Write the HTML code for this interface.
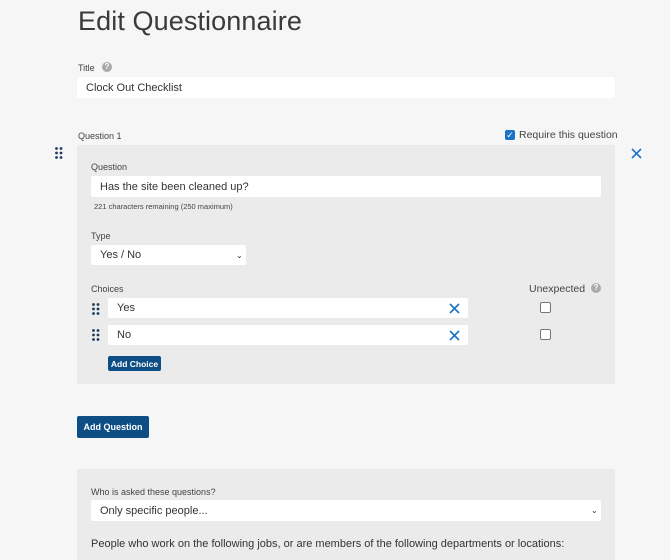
<!DOCTYPE html>
<html><head><style>
body{margin:0;width:670px;height:560px;background:#f6f6f6;font-family:"Liberation Sans",sans-serif;color:#333;position:relative;overflow:hidden}
.a{position:absolute}
.lbl{font-size:9px;color:#444}
.inp{background:#fff;border-radius:2px;font-size:11px;color:#333;box-sizing:border-box;padding-left:9px;display:flex;align-items:center}
.btn{background:#0d4f85;color:#fff;font-weight:bold;border-radius:2px;display:flex;align-items:center;justify-content:center}
.cb{width:9px;height:9px;border:1px solid #777;border-radius:2px;background:#fff}
.q{width:10px;height:10px;border-radius:50%;background:#aaa;color:#fff;font-size:8px;font-weight:bold;text-align:center;line-height:10px}
</style></head><body>
<div class="a" style="left:78px;top:6px;font-size:27px;font-weight:300;color:#3a3a3a;letter-spacing:.1px">Edit Questionnaire</div>
<div class="a lbl" style="left:78px;top:63px">Title</div>
<div class="a q" style="left:102px;top:62px">?</div>
<div class="a inp" style="left:77px;top:77px;width:538px;height:21px">Clock Out Checklist</div>
<div class="a lbl" style="left:78px;top:131px">Question 1</div>
<div class="a" style="left:505px;top:130px;width:10px;height:10px;background:#1a73c9;border-radius:2px;color:#fff;font-size:9px;line-height:10px;text-align:center">✓</div>
<div class="a" style="left:519px;top:129px;font-size:10.5px;color:#444">Require this question</div>
<svg class="a" style="left:55px;top:147px" width="8" height="12"><g fill="#1d3a5c"><circle cx="1.5" cy="1.5" r="1.4"/><circle cx="6" cy="1.5" r="1.4"/><circle cx="1.5" cy="6" r="1.4"/><circle cx="6" cy="6" r="1.4"/><circle cx="1.5" cy="10.5" r="1.4"/><circle cx="6" cy="10.5" r="1.4"/></g></svg>
<svg class="a" style="left:631px;top:148px" width="11" height="11"><path d="M1 1L10 10M10 1L1 10" stroke="#1a73c9" stroke-width="1.6"/></svg>
<div class="a" style="left:77px;top:145px;width:538px;height:239px;background:#ebebeb"></div>
<div class="a lbl" style="left:91px;top:162px">Question</div>
<div class="a inp" style="left:91px;top:176px;width:510px;height:21px">Has the site been cleaned up?</div>
<div class="a" style="left:94px;top:202px;font-size:7.5px;color:#444">221 characters remaining (250 maximum)</div>
<div class="a lbl" style="left:91px;top:231px">Type</div>
<div class="a inp" style="left:91px;top:245px;width:155px;height:20px">Yes / No<span style="position:absolute;left:145px;font-size:8px">⌄</span></div>
<div class="a lbl" style="left:91px;top:284px">Choices</div>
<div class="a" style="left:529px;top:283px;font-size:10.5px;color:#444">Unexpected</div>
<div class="a q" style="left:591px;top:283px">?</div>
<svg class="a" style="left:92px;top:303px" width="8" height="12"><g fill="#1d3a5c"><circle cx="1.5" cy="1.5" r="1.4"/><circle cx="6" cy="1.5" r="1.4"/><circle cx="1.5" cy="6" r="1.4"/><circle cx="6" cy="6" r="1.4"/><circle cx="1.5" cy="10.5" r="1.4"/><circle cx="6" cy="10.5" r="1.4"/></g></svg>
<svg class="a" style="left:92px;top:329px" width="8" height="12"><g fill="#1d3a5c"><circle cx="1.5" cy="1.5" r="1.4"/><circle cx="6" cy="1.5" r="1.4"/><circle cx="1.5" cy="6" r="1.4"/><circle cx="6" cy="6" r="1.4"/><circle cx="1.5" cy="10.5" r="1.4"/><circle cx="6" cy="10.5" r="1.4"/></g></svg>
<div class="a inp" style="left:108px;top:298px;width:360px;height:20px">Yes</div>
<div class="a inp" style="left:108px;top:325px;width:360px;height:20px">No</div>
<svg class="a" style="left:449px;top:303px" width="11" height="11"><path d="M1 1L10 10M10 1L1 10" stroke="#1a73c9" stroke-width="1.6"/></svg>
<svg class="a" style="left:449px;top:330px" width="11" height="11"><path d="M1 1L10 10M10 1L1 10" stroke="#1a73c9" stroke-width="1.6"/></svg>
<div class="a cb" style="left:540px;top:302px"></div>
<div class="a cb" style="left:540px;top:329px"></div>
<div class="a btn" style="left:108px;top:356px;width:53px;height:15px;font-size:8.5px">Add Choice</div>
<div class="a btn" style="left:77px;top:416px;width:72px;height:22px;font-size:9px">Add Question</div>
<div class="a" style="left:77px;top:469px;width:538px;height:91px;background:#ebebeb"></div>
<div class="a lbl" style="left:91px;top:487px">Who is asked these questions?</div>
<div class="a inp" style="left:91px;top:500px;width:510px;height:21px">Only specific people...<span style="position:absolute;left:500px;font-size:8px">⌄</span></div>
<div class="a" style="left:91px;top:538px;font-size:11px;color:#333">People who work on the following jobs, or are members of the following departments or locations:</div>
</body></html>
